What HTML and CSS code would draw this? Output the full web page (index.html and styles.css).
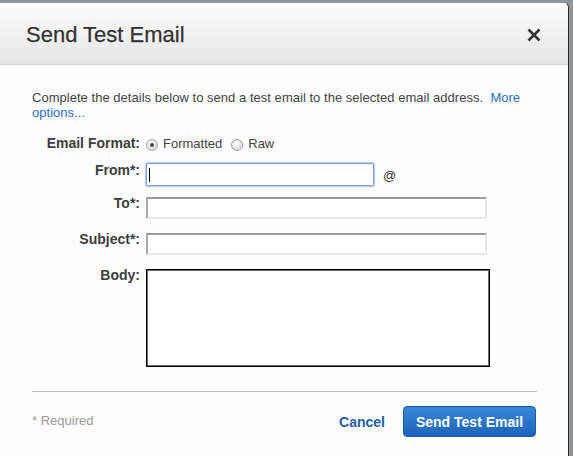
FILE: index.html
```html
<!DOCTYPE html>
<html>
<head>
<meta charset="utf-8">
<link rel="stylesheet" href="styles.css">
</head>
<body>
<div class="dialog">
  <div class="header">
    <h1 class="title">Send Test Email</h1>
    <svg class="close" width="14" height="14" viewBox="0 0 14 14"><path d="M1.5 1.5 L12.5 12.5 M12.5 1.5 L1.5 12.5" stroke="#333" stroke-width="2.5" fill="none"/></svg>
  </div>
  <div class="content">
    <p class="intro">Complete the details below to send a test email to the selected email address.&nbsp; <a class="link">More options...</a></p>
    <div class="form">
      <div class="label l-format">Email Format:</div>
      <div class="radios">
        <span class="radio checked"></span><span class="rlabel">Formatted</span>
        <span class="radio"></span><span class="rlabel">Raw</span>
      </div>
      <div class="label l-from">From*:</div>
      <div class="from-row">
        <div class="field focus"><span class="caret"></span></div>
        <span class="at">@</span>
      </div>
      <div class="label l-to">To*:</div>
      <div class="field inset r-to"></div>
      <div class="label l-subject">Subject*:</div>
      <div class="field inset r-subject"></div>
      <div class="label l-body">Body:</div>
      <div class="textarea"></div>
    </div>
    <div class="divider"></div>
    <div class="footer">
      <span class="required">* Required</span>
      <div class="actions">
        <a class="cancel">Cancel</a>
        <button class="primary">Send Test Email</button>
      </div>
    </div>
  </div>
</div>
</body>
</html>
```

FILE: styles.css
```css
html, body {
  margin: 0;
  padding: 0;
  height: 100%;
}
body {
  background: #8f9598;
  font-family: "Liberation Sans", Arial, sans-serif;
  overflow: hidden;
}
.dialog {
  margin-top: 2px;
  width: 569px;
  height: 454px;
  background: #fcfdfc;
  border-right: 1px solid #2a2a2a;
  border-top: 1px solid #9a9a9a;
  border-top-right-radius: 6px;
  box-sizing: border-box;
  overflow: hidden;
}
.header {
  height: 61px;
  border-bottom: 1px solid #cfcfcf;
  background: linear-gradient(#fdfdfd, #e6e6e6);
  display: flex;
  align-items: center;
  justify-content: space-between;
  padding: 0 27px 0 26px;
}
.title {
  margin: 2px 0 0 0;
  font-size: 22px;
  font-weight: normal;
  color: #333;
  -webkit-text-stroke: 0.25px #333;
}
.close {
  margin-top: 2px;
}
.content {
  padding: 25px 31px 0 32px;
}
.intro {
  margin: 0;
  font-size: 13px;
  line-height: 15px;
  color: #444;
  letter-spacing: 0.03px;
}
.link {
  color: #2b6fc0;
}
.form {
  margin-top: 16px;
  display: grid;
  grid-template-columns: 108px 1fr;
  column-gap: 6px;
  font-size: 13px;
  line-height: 15px;
}
.label {
  text-align: right;
  font-weight: bold;
  font-size: 14px;
  color: #3d3d3d;
}
.radios {
  display: flex;
  align-items: center;
  color: #444;
}
.radio {
  width: 10px;
  height: 10px;
  border-radius: 50%;
  border: 1px solid #a0a0a0;
  background: radial-gradient(circle at 40% 35%, #fbfbfb, #d4d4d4);
  margin-right: 5px;
  position: relative;
  top: 1px;
}
.radio.checked::after {
  content: "";
  position: absolute;
  left: 3px;
  top: 3px;
  width: 4px;
  height: 4px;
  border-radius: 50%;
  background: #444;
}
.rlabel {
  margin-right: 9px;
}
.l-from, .from-row { margin-top: 12px; }
.l-from { margin-top: 12px; }
.from-row {
  display: flex;
  align-items: center;
}
.field {
  box-sizing: border-box;
  background: #fff;
}
.field.focus {
  width: 228px;
  height: 23px;
  border: 1px solid #7f9fd6;
  border-radius: 2px;
  box-shadow: 0 0 1px 1px #b7cbee;
  display: flex;
  align-items: center;
  padding-left: 2px;
}
.caret {
  width: 1px;
  height: 14px;
  background: #000;
}
.at {
  margin-left: 9px;
  font-size: 13px;
  color: #333;
  margin-top: 2px;
}
.field.inset {
  width: 341px;
  height: 22px;
  border-style: solid;
  border-width: 2px;
  border-color: #9a9a9a #e9e9e9 #e9e9e9 #a9a9a9;
}
.l-to, .r-to { margin-top: 11px; }
.l-to { margin-top: 10px; }
.l-subject, .r-subject { margin-top: 14px; }
.l-subject { margin-top: 13px; }
.l-body, .textarea { margin-top: 14px; }
.l-body { margin-top: 13px; }
.textarea {
  box-sizing: border-box;
  width: 344px;
  height: 98px;
  border: 1px solid #000;
  box-shadow: inset 0 0 0 1px #6a6a6a;
  background: #fdfefd;
}
.divider {
  margin-top: 24px;
  height: 1px;
  background: #bdbdbd;
}
.footer {
  margin-top: 14px;
  display: flex;
  align-items: center;
  justify-content: space-between;
}
.required {
  font-size: 13px;
  color: #9a9a9a;
  margin-top: -2px;
}
.actions {
  display: flex;
  align-items: center;
}
.cancel {
  font-size: 14px;
  font-weight: bold;
  color: #1f5ea8;
  margin-right: 18px;
  margin-top: 1px;
}
.primary {
  width: 133px;
  height: 31px;
  border: 1px solid #1b5ba8;
  border-radius: 4px;
  background: linear-gradient(#3a88d8, #1b63ba);
  color: #fff;
  font-family: "Liberation Sans", Arial, sans-serif;
  font-size: 14px;
  font-weight: bold;
  padding: 0;
  margin-right: 1px;
}
```
